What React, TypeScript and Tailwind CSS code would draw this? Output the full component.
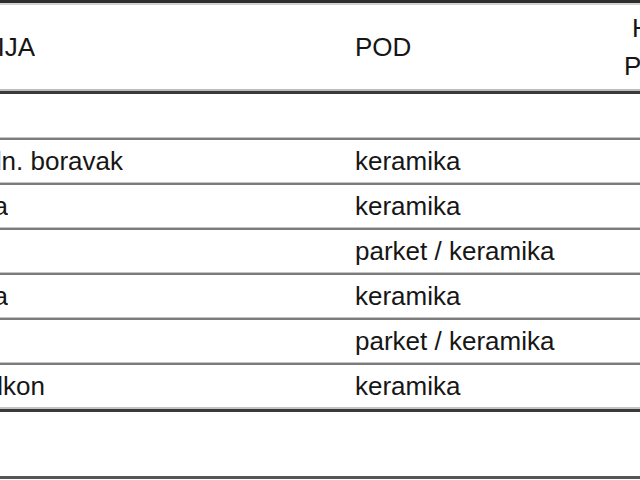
const rows = [
  { room: 'Kuhinja i dn. boravak', end: 123, floor: 'keramika' },
  { room: 'Kupaona', end: 8, floor: 'keramika' },
  { room: '', end: 0, floor: 'parket / keramika' },
  { room: 'Kupaona', end: 8, floor: 'keramika' },
  { room: '', end: 0, floor: 'parket / keramika' },
  { room: 'Balkon', end: 45, floor: 'keramika' },
]

function Separator() {
  return (
    <div>
      <div className="h-px bg-[#c4c4c4]" />
      <div className="h-[2px] bg-[#7c7c7c]" />
    </div>
  )
}

function RoomCell({ text, end }: { text: string; end: number }) {
  return (
    <div className="w-[343px] shrink-0">
      <div className="flex justify-end overflow-hidden whitespace-nowrap" style={{ width: end }}>
        {text}
      </div>
    </div>
  )
}

export default function App() {
  return (
    <div
      className="w-[640px] h-[480px] overflow-hidden bg-white text-[#161616] text-[26px] flex flex-col"
      style={{ fontFamily: '"Liberation Sans", Arial, sans-serif' }}
    >
      <div className="h-[3px] bg-[#2e2e2e]" />
      <div className="h-[2px] bg-[#d2d2d2]" />

      {/* header */}
      <div className="h-[84px] flex items-center">
        <RoomCell text="PROSTORIJA" end={35} />
        <div className="w-[252px] shrink-0 pl-[12px]">POD</div>
        <div className="flex-1 flex flex-col leading-[38px] whitespace-nowrap overflow-hidden">
          <span className="pl-[37px]">HIDRO</span>
          <span className="pl-[29px]">POVRŠINA</span>
        </div>
      </div>
      <div className="h-[2px] bg-[#bdbdbd]" />
      <div className="h-[3px] bg-[#3a3a3a]" />

      <div className="h-[43px]" />

      {rows.map((r, i) => (
        <div key={i}>
          <Separator />
          <div className="h-[42px] flex items-center">
            <RoomCell text={r.room} end={r.end} />
            <div className="w-[252px] shrink-0 pl-[12px] whitespace-nowrap">{r.floor}</div>
            <div className="flex-1" />
          </div>
        </div>
      ))}

      <div className="h-[2px] bg-[#c4c4c4]" />
      <div className="h-[3px] bg-[#3a3a3a]" />

      <div className="h-[64px]" />
      <div className="h-[3px] bg-[#555555]" />
    </div>
  )
}
